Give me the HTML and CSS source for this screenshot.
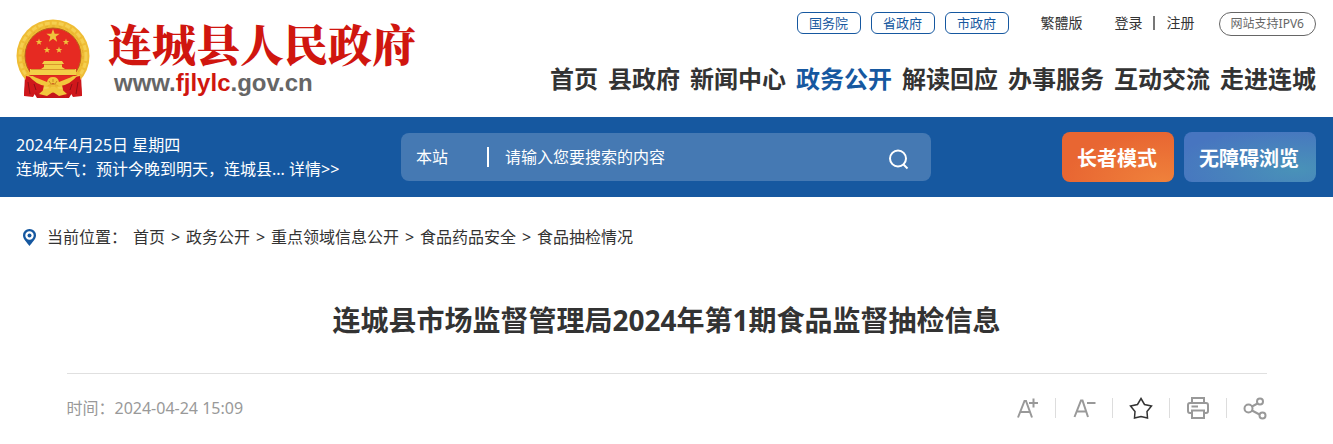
FILE: index.html
```html
<!DOCTYPE html>
<html lang="zh-CN">
<head>
    <meta charset="UTF-8">
    <meta name="viewport" content="width=device-width, initial-scale=1.0">
    <title>连城县人民政府</title>
    <link rel="stylesheet" href="styles.css">
</head>
<body>
    <header class="header">
        <a class="logo" href="#">
            <svg class="emblem" viewBox="0 0 74 80" aria-hidden="true">
                <defs>
                    <polygon id="star" points="0,-10 2.4,-3.2 9.5,-3.1 3.8,1.2 5.9,8.1 0,4 -5.9,8.1 -3.8,1.2 -9.5,-3.1 -2.4,-3.2"/>
                </defs>
                <path fill="#c5141a" d="M9 56 L65 56 L66 77 L56 74 L53 79 L21 79 L18 74 L8 77 Z"/>
                <circle cx="37" cy="37" r="36.5" fill="#efbd35"/>
                <circle cx="37" cy="37" r="33" fill="none" stroke="#f5cf50" stroke-width="3" stroke-dasharray="5 2"/>
                <circle cx="37" cy="37" r="30" fill="none" stroke="#e5ac2d" stroke-width="1" stroke-dasharray="3 4"/>
                <circle cx="37" cy="37" r="28" fill="#e62a22" stroke="#b9621a"/>
                <g fill="#efc23c">
                    <use href="#star" transform="translate(37 17) scale(.7)"/>
                    <use href="#star" transform="translate(23 23) scale(.35)"/>
                    <use href="#star" transform="translate(50 23) scale(.35)"/>
                    <use href="#star" transform="translate(31 31) scale(.35)"/>
                    <use href="#star" transform="translate(43 31) scale(.35)"/>
                </g>
                <path fill="#f3cf48" d="M28 42 H46 L48 45 H46 V48 L49 50 H60 V56 H14 V50 H25 L28 48 V45 H26 Z"/>
                <path stroke="#d9982c" d="M15 50.5 H59 M28 45.5 H46"/>
                <path stroke="#d8291f" d="M13 56.5 H61"/>
                <path fill="#cf171b" d="M10 57 Q22 58 28 66 L25 79 L20 73 L17 78 L8 77 Z M64 57 Q52 58 46 66 L49 79 L54 73 L57 78 L66 77 Z"/>
                <path fill="#f2c63c" d="M12 56 Q22 59 31 63 Q32 58 37 58 Q42 58 43 63 Q52 59 62 56 Q54 66 44 67 L37 64 L30 67 Q20 66 12 56 Z M23 75 Q29 68 37 69 Q45 68 51 75 L43 77 L37 73 L31 77 Z"/>
                <path fill="none" stroke="#8f1015" d="M12 63 L14 75 M18 65 L20 71 M62 63 L60 75 M56 65 L54 71"/>
                <path fill="none" stroke="#c98a22" d="M33 62 L35 65 M37 60 V63 M41 62 L39 65"/>
            </svg>
            <span class="logo-text">
                <span class="logo-name">连城县人民政府</span>
                <span class="logo-url">www.<em>fjlylc</em>.gov.cn</span>
            </span>
        </a>
        <div class="header-right">
            <div class="top-links">
                <a class="tag" href="#">国务院</a>
                <a class="tag" href="#">省政府</a>
                <a class="tag" href="#">市政府</a>
                <a class="lang" href="#">繁體版</a>
                <a class="login" href="#">登录</a>
                <a class="register" href="#">注册</a>
                <a class="ipv6" href="#">网站支持IPV6</a>
            </div>
            <nav class="nav">
                <a href="#">首页</a>
                <a href="#">县政府</a>
                <a href="#">新闻中心</a>
                <a class="active" href="#">政务公开</a>
                <a href="#">解读回应</a>
                <a href="#">办事服务</a>
                <a href="#">互动交流</a>
                <a href="#">走进连城</a>
            </nav>
        </div>
    </header>

    <div class="bar">
        <div class="info">
            <div>2024年4月25日 星期四</div>
            <div>连城天气：预计今晚到明天，连城县... <a href="#">详情&gt;&gt;</a></div>
        </div>
        <form class="search">
            <select class="scope" aria-label="搜索范围">
                <option>本站</option>
            </select>
            <input class="keyword" type="text" placeholder="请输入您要搜索的内容" aria-label="搜索内容">
            <button class="search-btn" type="button" aria-label="搜索">
                <svg width="20" height="21" viewBox="0 0 20 21" fill="none" stroke="#fff" stroke-width="2">
                    <circle cx="9" cy="9.500" r="8"/>
                    <path d="M14 15 L18.500 19.500"/>
                </svg>
            </button>
        </form>
        <div class="modes">
            <button class="mode elder" type="button">长者模式</button>
            <button class="mode barrier-free" type="button">无障碍浏览</button>
        </div>
    </div>

    <nav class="crumbs">
        <svg class="pin" width="13" height="17" viewBox="0 0 13 17" aria-hidden="true">
            <path fill="#1658a0" fill-rule="evenodd" d="M6.500 0 A6.400 6.400 0 0 1 13 6.500 C13 10 9 13.500 6.500 17 C4 13.500 0 10 0 6.500 A6.400 6.400 0 0 1 6.500 0 Z M6.500 2.300 A4.200 4.200 0 1 0 6.500 10.700 A4.200 4.200 0 1 0 6.500 2.300 Z"/>
            <circle cx="6.500" cy="6.500" r="2" fill="#1658a0"/>
        </svg>
        <span class="crumbs-label">当前位置：</span>
        <a href="#">首页</a>
        <span class="sep">&gt;</span>
        <a href="#">政务公开</a>
        <span class="sep">&gt;</span>
        <a href="#">重点领域信息公开</a>
        <span class="sep">&gt;</span>
        <a href="#">食品药品安全</a>
        <span class="sep">&gt;</span>
        <a href="#">食品抽检情况</a>
    </nav>

    <main class="article">
        <h1>连城县市场监督管理局2024年第1期食品监督抽检信息</h1>
        <div class="meta">
            <span>时间：2024-04-24 15:09</span>
            <div class="tools">
                <button type="button" aria-label="放大字体">
                    <svg width="24" height="24" viewBox="0 0 24 24">
                        <path d="M3 21.500 L9.500 5 H11 L17 21.500 M5.500 16 H15 M14 7 H23 M18.500 2.500 V11.500"/>
                    </svg>
                </button>
                <button type="button" aria-label="缩小字体">
                    <svg width="24" height="24" viewBox="0 0 24 24">
                        <path d="M2.500 21 L9 4.500 H10.500 L16 21 M5 15.500 H14 M15 7 H23.500"/>
                    </svg>
                </button>
                <button class="fav" type="button" aria-label="收藏">
                    <svg width="24" height="24" viewBox="0 0 24 24">
                        <path d="M12 2.500 L15.500 8.500 L22.500 10 L18 15.500 L18.500 22 L12 20.500 L5.500 22 L6 15.500 L1.500 10 L8.500 8.500 Z"/>
                    </svg>
                </button>
                <button type="button" aria-label="打印">
                    <svg width="24" height="24" viewBox="0 0 24 24">
                        <path d="M6 7 V2 H18 V7 M6 17 H4 Q2 17 2 15 V9 Q2 7 4 7 H20 Q22 7 22 9 V15 Q22 17 20 17 H18 M6 14.500 H18 V22 H6 Z M5.500 10.500 H12"/>
                    </svg>
                </button>
                <button type="button" aria-label="分享">
                    <svg width="24" height="24" viewBox="0 0 24 24">
                        <circle cx="5.500" cy="12.500" r="4"/>
                        <circle cx="17" cy="5.500" r="3"/>
                        <circle cx="19.500" cy="19.500" r="3"/>
                        <path d="M9 10.500 L14.500 7.500 M9 14.500 L16.500 18.500"/>
                    </svg>
                </button>
            </div>
        </div>
    </main>
</body>
</html>
```

FILE: styles.css
```css
* {
    box-sizing: border-box;
}

body {
    margin: 0;
    font-family: "Noto Sans", "Noto Sans CJK SC", sans-serif;
    font-size: 16px;
    line-height: 24px;
    color: #333;
    background: #fff;
}

a {
    color: inherit;
    text-decoration: none;
}

button,
input,
select {
    font: inherit;
    border: none;
    background: none;
    padding: 0;
    margin: 0;
}

button {
    cursor: pointer;
}

.header {
    display: flex;
    justify-content: space-between;
    align-items: flex-start;
    padding: 12px 17px 18px 16px;
}

.logo {
    display: flex;
    gap: 18px;
    padding-top: 7px;
}

.emblem {
    width: 74px;
    height: 80px;
}

.logo-text {
    display: flex;
    flex-direction: column;
}

.logo-name {
    font-family: "Noto Serif CJK SC", "Noto Sans CJK SC", serif;
    font-size: 44px;
    font-weight: 900;
    line-height: 48px;
    color: #d0160f;
}

.logo-url {
    padding-left: 6px;
    font-family: "Liberation Sans", Arial, sans-serif;
    font-size: 24px;
    font-weight: bold;
    line-height: 32px;
    color: #666;
}

.logo-url em {
    font-style: normal;
    color: #d0160f;
}

.header-right {
    display: flex;
    flex-direction: column;
    align-items: flex-end;
    gap: 25px;
}

.top-links {
    display: flex;
    align-items: flex-start;
    font-size: 14px;
    line-height: 20px;
}

.tag {
    width: 64px;
    margin-right: 10px;
    border: 1px solid #1658a0;
    border-radius: 6px;
    font-size: 13px;
    text-align: center;
    color: #1658a0;
}

.lang,
.login,
.register {
    padding-top: 1px;
}

.lang {
    margin: 0 32px 0 22px;
}

.login {
    display: flex;
    align-items: center;
}

.login::after {
    content: "";
    height: 14px;
    margin: 0 12px 0 10px;
    border-left: 2px solid #777;
}

.ipv6 {
    margin-left: 24px;
    padding: 1px 11px;
    border: 1px solid #666;
    border-radius: 12px;
    font-size: 12px;
    color: #666;
}

.nav {
    display: flex;
    gap: 10px;
    font-size: 24px;
    font-weight: bold;
    line-height: 36px;
}

.nav .active {
    color: #1658a0;
}

.bar {
    display: flex;
    align-items: center;
    min-height: 80px;
    padding: 0 17px 0 16px;
    background: #1658a0;
    color: #fff;
}

.info {
    flex: 0 0 385px;
}

.search {
    display: flex;
    align-items: center;
    flex: 0 1 530px;
    height: 48px;
    padding: 0 22px 0 15px;
    border-radius: 8px;
    background: #4579b3;
}

.scope {
    width: 73px;
    height: 20px;
    line-height: 20px;
    border-right: 2px solid #fff;
    appearance: none;
    color: #fff;
}

.scope option {
    color: #333;
}

.keyword {
    flex: 1;
    min-width: 0;
    padding-left: 16px;
    outline: none;
    color: #fff;
}

.keyword::placeholder {
    color: #fff;
    opacity: 1;
}

.search-btn {
    display: flex;
    padding-top: 4px;
}

.modes {
    display: flex;
    gap: 10px;
    margin-left: auto;
}

.mode {
    height: 50px;
    padding: 4px 15px 0;
    border-radius: 8px;
    font-size: 20px;
    font-weight: bold;
    color: #fff;
}

.elder {
    padding-right: 17px;
    background: radial-gradient(ellipse at 90% 100%, #ef813b, #e86632 70%);
}

.barrier-free {
    padding-right: 17px;
    background: radial-gradient(ellipse at 85% 75%, #4992b8, #4775c0 80%);
}

.crumbs {
    display: flex;
    align-items: center;
    padding: 28px 23px 0;
}

.crumbs-label {
    margin: 0 6px 0 11px;
}

.sep {
    width: 9px;
    margin: 0 6px;
}

.article {
    max-width: 1200px;
    margin: 0 auto;
    padding: 50px 0 20px;
}

h1 {
    margin: 0;
    padding-bottom: 32px;
    border-bottom: 1px solid #e0e0e0;
    font-size: 28px;
    line-height: 42px;
    text-align: center;
}

.meta {
    display: flex;
    justify-content: space-between;
    align-items: center;
    padding-top: 22px;
    color: #999;
}

.tools {
    display: flex;
}

.tools button {
    display: flex;
    align-items: center;
    height: 20px;
    padding: 0 16px;
    border-right: 1px solid #ddd;
}

.tools button:last-child {
    padding-right: 0;
    border-right: none;
}

.tools svg {
    fill: none;
    stroke: #999;
    stroke-width: 2;
}

.tools .fav svg {
    stroke: #333;
    stroke-width: 1.5;
}
```
